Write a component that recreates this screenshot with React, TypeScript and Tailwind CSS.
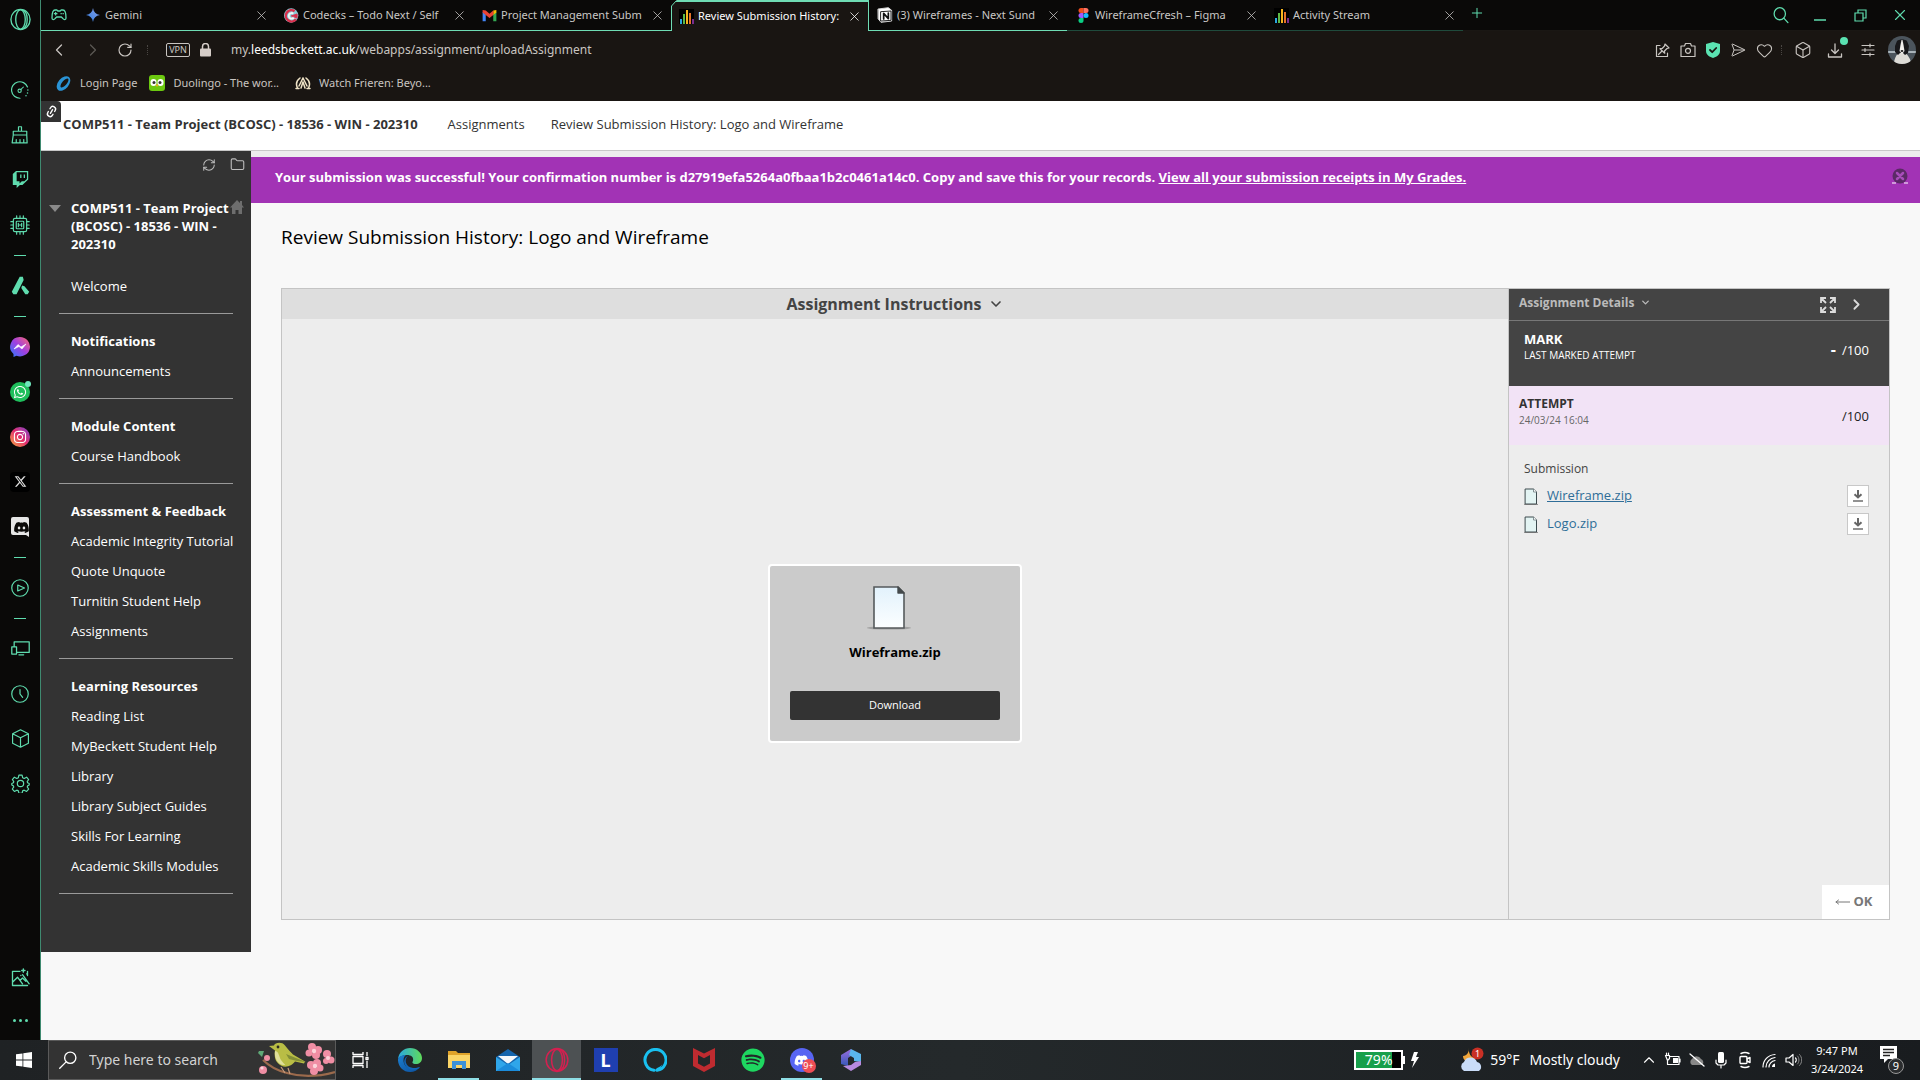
import React from 'react';
import {
  Box, ChevronDown, ChevronLeft, ChevronRight, ChevronUp, Folder, Heart,
  Link2, Plus, RefreshCw, RotateCw, SendHorizontal, X,
} from 'lucide-react';
import { FaDiscord, FaInstagram, FaSpotify, FaTwitch, FaWhatsapp, FaXTwitter } from 'react-icons/fa6';

type Kids = { children?: React.ReactNode };

/* ---------- Small drawings ---------- */

function Svg({ size = 20, w, h, box = '0 0 24 24', children }: Kids & { size?: number; w?: number; h?: number; box?: string }) {
  return (
    <svg width={w ?? size} height={h ?? size} viewBox={box} fill="none" stroke="currentColor" strokeWidth="1.4" strokeLinecap="round" strokeLinejoin="round" aria-hidden="true" className="shrink-0">
      {children}
    </svg>
  );
}

const OperaOutline = ({ size = 24 }: { size?: number }) => (
  <Svg size={size}>
    <ellipse cx="12" cy="12" rx="10" ry="10.5" />
    <ellipse cx="12" cy="12" rx="5" ry="10" />
    <path d="M14 2.2c3.200 1 5 5 5 9.800s-1.800 8.800-5 9.800" />
  </Svg>
);

const BarsIcon = () => (
  <Svg size={15} box="0 0 15 15">
    <rect width="15" height="15" fill="#000" stroke="none" />
    <g stroke="none">
      <rect x="1" y="10" width="2" height="5" fill="#2aa7e0" />
      <rect x="4" y="5" width="2" height="10" fill="#5db947" />
      <rect x="7" y="1" width="2" height="14" fill="#f5b51e" />
      <rect x="10" y="4" width="2" height="11" fill="#e5732a" />
      <rect x="13" y="10" width="2" height="5" fill="#7a2c8c" />
    </g>
  </Svg>
);

const GeminiIcon = () => (
  <Svg size={14}>
    <defs>
      <linearGradient id="gem" x1="0" y1="1" x2="1" y2="0">
        <stop offset="0" stopColor="#2f7de1" />
        <stop offset="1" stopColor="#8aa0e8" />
      </linearGradient>
    </defs>
    <path d="M12 0c1 7 5 11 12 12-7 1-11 5-12 12-1-7-5-11-12-12 7-1 11-5 12-12z" fill="url(#gem)" stroke="none" />
  </Svg>
);

const CodecksIcon = () => (
  <Svg size={15}>
    <circle cx="11.500" cy="12" r="11.500" fill="#8ccbd6" stroke="none" />
    <path d="M17 5a9 9 0 1 0 2 13" stroke="#d92f4c" strokeWidth="4" strokeLinecap="butt" />
    <path d="M15 9a4.500 4.500 0 1 0 1 6" stroke="#f4f4f4" strokeWidth="3" strokeLinecap="butt" />
    <path d="M12 12.500l9-3v6z" fill="#d92f4c" stroke="#d92f4c" />
  </Svg>
);

const GmailIcon = () => (
  <Svg size={15}>
    <g stroke="none">
      <path d="M1 21V6l5 4v11z" fill="#4285f4" />
      <path d="M18 21V10l5-4v15z" fill="#34a853" />
      <path d="M18 4l5-1v4l-5 4z" fill="#fbbc04" />
      <path d="M1 3l5 1 6 5 6-5v7l-6 5-6-5-5-4z" fill="#ea4335" />
    </g>
  </Svg>
);

const NotionIcon = () => (
  <Svg size={16}>
    <path d="M2 3l15-2 5 4v16l-16 2-4-5z" fill="#fff" stroke="#ddd" />
    <path d="M6 7l15-1v14l-15 1z" fill="#fff" stroke="#111" />
    <path d="M10 18V9.500l7 8V9" stroke="#111" strokeWidth="2.600" />
  </Svg>
);

const FigmaIcon = () => (
  <Svg w={11} h={15} box="0 0 16 24">
    <g stroke="none">
      <path d="M8 0H4a4 4 0 0 0 0 8h4z" fill="#f24e1e" />
      <path d="M8 0h4a4 4 0 0 1 0 8H8z" fill="#ff7262" />
      <path d="M8 8H4a4 4 0 0 0 0 8h4z" fill="#a259ff" />
      <circle cx="12" cy="12" r="4" fill="#1abcfe" />
      <path d="M8 16H4a4 4 0 1 0 4 4z" fill="#0acf83" />
    </g>
  </Svg>
);

const PageIcon = ({ w, h }: { w: number; h: number }) => (
  <Svg w={w} h={h} box="0 0 44 44">
    <defs>
      <linearGradient id="paper" x1="0" y1="0" x2="0" y2="1">
        <stop offset="0" stopColor="#e2f2fc" />
        <stop offset="1" stopColor="#fcfeff" />
      </linearGradient>
    </defs>
    <ellipse cx="22" cy="42" rx="22" ry="1.600" fill="#777" opacity=".5" stroke="none" />
    <path d="M7 1h24l6 6v35H7z" fill="url(#paper)" stroke="#555a5c" strokeWidth="1.600" strokeLinejoin="miter" />
    <path d="M31 1v6h6z" fill="#444a4c" stroke="#444a4c" />
  </Svg>
);

const SmallPage = () => (
  <Svg w={14} h={17} box="0 0 14 17">
    <path d="M1.500 1h8l3 3V16h-11z" fill="#e3f4f3" stroke="#3c4a4e" strokeWidth="1" />
    <path d="M9.500 1v3h3" fill="#fff" stroke="#6c7a7e" strokeWidth=".8" />
    <path d="M0 16.500h14" stroke="#555" strokeWidth=".6" />
  </Svg>
);

const DownloadGlyph = () => (
  <Svg size={12} box="0 0 12 12">
    <path d="M6 0v7M2.500 4.200L6 7.500l3.500-3.300" stroke="#666" strokeWidth="2" strokeLinecap="butt" strokeLinejoin="miter" />
    <path d="M1 11h10" stroke="#777" strokeWidth="1.600" strokeLinecap="butt" />
  </Svg>
);

/* ---------- Browser tab strip ---------- */

const tabs = [
  { title: 'Gemini', icon: <GeminiIcon /> },
  { title: 'Codecks – Todo Next / Self', icon: <CodecksIcon /> },
  { title: 'Project Management Subm', icon: <GmailIcon /> },
  { title: 'Review Submission History:', icon: <BarsIcon />, active: true },
  { title: '(3) Wireframes - Next Sund', icon: <NotionIcon /> },
  { title: 'WireframeCfresh – Figma', icon: <FigmaIcon /> },
  { title: 'Activity Stream', icon: <BarsIcon /> },
];

function TabStrip() {
  return (
    <header className="flex h-[31px] shrink-0 text-[#c9c7c5]">
      <div className="flex w-9 shrink-0 items-center justify-center border-b border-[#6fdcb4] text-[#5fdcae]">
        <Svg w={16} h={14} box="0 0 24 20">
          <path d="M6 2.500h3l1 1.500h4l1-1.500h3c3 0 4.500 6 4.500 12 0 3-3 3-5 .5l-2-2h-7l-2 2c-2 2.500-5 2.500-5-.5 0-6 1.500-12 4.500-12z" strokeWidth="2" />
          <path d="M7 6v4M5 8h4M15 8h.5M18 8h.5" strokeWidth="1.800" />
        </Svg>
      </div>
      <nav aria-label="Tabs" className="flex min-w-0">
        {tabs.map((t, i) => (
          <div
            key={i}
            className={
              t.active
                ? 'relative flex w-[198px] min-w-0 items-center border-x border-t-2 border-[#6fdcb4] bg-[#191512] pl-1.5 text-white'
                : i > 4
                  ? 'flex w-[198px] min-w-0 items-center border-b border-[#1f4a3c] pl-2'
                  : 'flex w-[198px] min-w-0 items-center border-b border-[#6fdcb4] pl-2'
            }
          >
            {t.active && (
              <svg width="6" height="8" viewBox="0 0 6 8" className="absolute -top-0.5 -left-px" aria-hidden="true">
                <path d="M0 0h6L0 7z" fill="#0b0a08" />
                <path d="M.5 8V6L5.500.5" stroke="#6fdcb4" fill="none" />
              </svg>
            )}
            <a href="#tab" className="flex min-w-0 flex-1 items-center gap-1 text-[11px] whitespace-nowrap">
              <span className="flex w-4 shrink-0 justify-center">{t.icon}</span>
              <span>{t.title}</span>
            </a>
            <button aria-label={'Close ' + t.title} className="flex w-7 shrink-0 items-center justify-center">
              <X size={15} strokeWidth={1.25} />
            </button>
          </div>
        ))}
      </nav>
      <div className="flex flex-1 items-center border-b border-[#1a1714] pb-1 pl-1.5 text-[#5fdcae]">
        <button aria-label="New tab"><Plus size={16} strokeWidth={1.5} /></button>
      </div>
      <div className="flex shrink-0 items-center border-b border-[#1a1714] text-[#5fdcae]">
        <button aria-label="Search tabs" className="flex w-10 justify-center">
          <Svg size={17}><ellipse cx="11" cy="9.500" rx="8" ry="8.500" strokeWidth="1.800" /><path d="M17 16l5.500 6" strokeWidth="1.800" /></Svg>
        </button>
        <button aria-label="Minimize" className="flex w-10 justify-center pt-2.5"><Svg w={12} h={2} box="0 0 12 2"><path d="M0 1h12" /></Svg></button>
        <button aria-label="Restore" className="flex w-10 justify-center">
          <Svg size={13} box="0 0 13 13"><path d="M4 4V1h8v8H9M1 4h8v8H1z" strokeWidth="1.200" strokeLinejoin="miter" /></Svg>
        </button>
        <button aria-label="Close window" className="flex w-10 justify-center"><X size={18} strokeWidth={1.5} /></button>
      </div>
    </header>
  );
}

function Toolbar() {
  return (
    <div className="flex h-[38px] shrink-0 items-center text-[#c9c5c1]">
      <button aria-label="Back" className="flex w-9 justify-center"><ChevronLeft size={20} strokeWidth={1.5} /></button>
      <button aria-label="Forward" className="flex w-8 justify-center text-[#5c5854]"><ChevronRight size={20} strokeWidth={1.5} /></button>
      <button aria-label="Reload" className="flex w-8 justify-center"><RotateCw size={16} strokeWidth={1.75} /></button>
      <span className="ml-1.5 h-2.5 border-l border-dotted border-[#4a4643]" />
      <span className="ml-4.5 flex h-3.5 w-6 items-center justify-center rounded-xs border border-[#c9c5c1] text-[9px]">VPN</span>
      <button aria-label="Site information" className="ml-2.5">
        <Svg w={11} h={14} box="0 0 11 14">
          <rect x="0" y="5.500" width="11" height="8" rx="1" fill="#d5cdc8" stroke="none" />
          <path d="M2.500 6V3.500a3 3 0 0 1 6 0V6" stroke="#d5cdc8" strokeWidth="1.500" />
        </Svg>
      </button>
      <button aria-label="Edit address" className="ml-5 flex-1 text-left text-xs">
        my.<span className="text-white">leedsbeckett.ac.uk</span>/webapps/assignment/uploadAssignment
      </button>
      <div className="flex items-center gap-2.5">
        <button aria-label="Pin page">
          <Svg size={15} box="0 0 15 15"><path d="M5 2.500H1.500v11h11V10M10 1l4 4-2 .5-2.500 2.500.2 2.200L5 5.700l2.200-.2L9.500 3zM7 8l-3.500 3.500" strokeWidth="1.200" /></Svg>
        </button>
        <button aria-label="Snapshot">
          <Svg size={16} box="0 0 16 16"><path d="M1 4h3.500l1-2.500h5l1 2.500H15v10.500H1z" strokeWidth="1.200" /><circle cx="8" cy="8.800" r="2.500" strokeWidth="1.200" /></Svg>
        </button>
        <button aria-label="Ad blocker">
          <Svg w={14} h={16} box="0 0 14 16">
            <path d="M7 0l7 2v7c0 4-4 6-7 7-3-1-7-3-7-7V2z" fill="#5be3b2" stroke="none" />
            <path d="M4 8l2.200 2.200L10.200 6" stroke="#191512" strokeWidth="1.800" />
          </Svg>
        </button>
        <button aria-label="Send"><SendHorizontal size={16} strokeWidth={1.5} /></button>
        <button aria-label="Bookmark"><Heart size={17} strokeWidth={1.5} /></button>
      </div>
      <span className="ml-2 h-2.5 border-l border-dotted border-[#4a4643]" />
      <button aria-label="Extensions" className="ml-3"><Box size={18} strokeWidth={1.5} /></button>
      <button aria-label="Downloads" className="relative ml-3.5">
        <Svg size={18} box="0 0 18 18"><path d="M9 3v9M5.500 9L9 12.500 12.500 9M2.500 13v3h13v-3" strokeWidth="1.300" /></Svg>
        <span className="absolute -top-1 -right-1 size-2 rounded-full bg-[#5be3b2]" />
      </button>
      <button aria-label="Easy setup" className="ml-4">
        <Svg size={16} box="0 0 16 16"><path d="M2 3.500h12M2 8h12M2 12.500h12M10 2v3M5 6.500v3M10 11v3" strokeWidth="1.200" /></Svg>
      </button>
      <button aria-label="Profile" className="mr-1 ml-3 overflow-hidden rounded-full">
        <svg width="28" height="28" viewBox="0 0 28 28" aria-hidden="true">
          <rect width="28" height="28" fill="#4b545c" />
          <path d="M0 15h28v2H0z" fill="#a9b3b9" />
          <path d="M6 28c0-5 2-8 4-11h8c2 3 5 6 5 11z" fill="#dddbd6" />
          <path d="M9 5c2-2 8-2 10 0l2 5-1 7-3 2-2-2h-3l-2 2-3-3 0-6z" fill="#17171a" />
          <path d="M13.500 4h1l1 5 1 6-2.500 3-2.500-3 1-6z" fill="#f1efec" />
          <ellipse cx="14" cy="15" rx="1.400" ry="1" fill="#222" />
        </svg>
      </button>
    </div>
  );
}

function Bookmarks() {
  return (
    <div className="flex h-8 shrink-0 items-center pb-1 pl-3.5 text-[11px] text-[#c9c5c1]">
      <a href="#login" className="flex items-center gap-2">
        <Svg size={17}>
          <ellipse cx="12" cy="12" rx="12" ry="7.500" transform="rotate(-50 12 12)" stroke="none" fill="#2a93d5" />
          <ellipse cx="13" cy="11.500" rx="8" ry="3.200" transform="rotate(-50 13 11)" stroke="none" fill="#191512" />
        </Svg>
        Login Page
      </a>
      <a href="#duolingo" className="ml-3 flex items-center gap-2">
        <Svg size={16} box="0 0 16 16">
          <rect width="16" height="16" rx="3" fill="#6cc910" stroke="none" />
          <rect x="1.500" y="4" width="6" height="7" rx="3" fill="#fff" stroke="none" />
          <rect x="8.500" y="4" width="6" height="7" rx="3" fill="#fff" stroke="none" />
          <circle cx="5" cy="7.500" r="1.500" fill="#333" stroke="none" />
          <circle cx="11" cy="7.500" r="1.500" fill="#333" stroke="none" />
          <path d="M6.500 9.500h3L8 12z" fill="#f5a91f" stroke="none" />
        </Svg>
        Duolingo - The wor...
      </a>
      <a href="#watch" className="ml-4 flex items-center gap-2">
        <Svg w={16} h={14} box="0 0 16 14">
          <path d="M8 2L4 10M8 2l4 8M5 2C1 5 1 9 2.500 12M11 2c4 3 4 7 2.500 10M8 6l-2 6M8 6l2 6M1 12.500h3M12 12.500h3" stroke="#efe3c6" strokeWidth="1.500" />
        </Svg>
        Watch Frieren: Beyo...
      </a>
    </div>
  );
}

/* ---------- Browser side bar ---------- */

const Slot = ({ label, children }: Kids & { label: string }) => (
  <button aria-label={label} className="flex h-[45px] w-full shrink-0 items-center justify-center">{children}</button>
);
const Dash = () => (
  <div className="flex h-4 w-full shrink-0 items-center justify-center"><span className="h-px w-3 bg-[#5fdcae]" /></div>
);

function OperaBar() {
  return (
    <aside className="flex w-[41px] shrink-0 flex-col items-center border-r border-[#3f8a70] bg-[#0a0908] text-[#5fdcae]">
      <button aria-label="Opera menu" className="mb-7.5 flex h-[37px] shrink-0 items-center pt-0.5"><OperaOutline size={23} /></button>
      <Slot label="GX Control">
        <Svg size={18}>
          <path d="M12 23A11 11 0 1 1 22 8" strokeWidth="1.600" /><path d="M22.500 12v.1M22 16v.1M20 19.500v.1" strokeWidth="2" />
          <circle cx="11.500" cy="13" r="2.200" /><path d="M13 11.500l3.500-3.500" />
        </Svg>
      </Slot>
      <Slot label="GX Cleaner">
        <Svg size={18}><path d="M10 7V1h4v6M3 7h18v5H3zM3 12L1.500 22.500h20L21 12M7 22v-4M12 22v-4M17 22v-4" strokeWidth="1.600" /></Svg>
      </Slot>
      <Slot label="Twitch"><FaTwitch size={17} /></Slot>
      <Slot label="Mods">
        <Svg size={20}>
          <rect x="4" y="4" width="16" height="16" rx="2" /><rect x="7.500" y="7.500" width="9" height="9" rx="1" />
          <path d="M10 10v4M14 10v4M10 12h4M8 1v3M12 1v3M16 1v3M8 20v3M12 20v3M16 20v3M1 8h3M1 12h3M1 16h3M20 8h3M20 12h3M20 16h3" />
        </Svg>
      </Slot>
      <Dash />
      <Slot label="Aria">
        <Svg size={19}><path d="M11 1h4l1 4L7 23H3l-2-3zM14 12l3 1 6 7-2 3h-3l-5-8z" fill="#5fdcae" stroke="none" /></Svg>
      </Slot>
      <Dash />
      <Slot label="Messenger">
        <svg width="20" height="20" viewBox="0 0 20 20" aria-hidden="true">
          <defs><linearGradient id="msg" x1="0" y1="1" x2="1" y2="0"><stop offset="0" stopColor="#2b7bff" /><stop offset=".5" stopColor="#a03fe0" /><stop offset="1" stopColor="#ff6a70" /></linearGradient></defs>
          <path d="M10 0a10 9.700 0 1 1-3.500 18.800L3.500 20v-3A9.700 9.700 0 0 1 10 0z" fill="url(#msg)" />
          <path d="M4 12l4-4.500 3 2.500 5-3-4 5-3-2.500z" fill="#fff" stroke="#fff" strokeWidth=".6" />
        </svg>
      </Slot>
      <Slot label="WhatsApp">
        <span className="relative flex size-5 items-center justify-center rounded-full bg-[#1fbf5c] text-white">
          <FaWhatsapp size={14} />
          <span className="absolute -top-px -right-px size-1.5 rounded-full bg-[#6fe6bd]" />
        </span>
      </Slot>
      <Slot label="Instagram">
        <span className="flex size-5 items-center justify-center rounded-full bg-linear-to-tr from-[#f7a52c] via-[#e2276b] to-[#7b2fd0] text-white"><FaInstagram size={14} /></span>
      </Slot>
      <Slot label="X"><span className="flex size-5 items-center justify-center rounded-sm bg-black text-[#dedede]"><FaXTwitter size={13} /></span></Slot>
      <Slot label="Discord">
        <svg width="18" height="20" viewBox="0 0 18 20" aria-hidden="true">
          <path d="M2 0h14a2 2 0 0 1 2 2v18l-3-2H2a2 2 0 0 1-2-2V2a2 2 0 0 1 2-2z" fill="#e6e6e6" />
          <FaDiscord x="2.500" y="2.500" width="13" height="13" color="#0a0908" />
        </svg>
      </Slot>
      <Dash />
      <Slot label="Player"><Svg size={18}><circle cx="12" cy="12" r="11" strokeWidth="1.600" /><path d="M9 8l9 4-9 4z" strokeWidth="1.600" /></Svg></Slot>
      <Dash />
      <Slot label="Flow"><Svg size={19}><path d="M4 10V3.500h19V17H7M1 10h6v9H1zM10 20h6" strokeWidth="1.600" /></Svg></Slot>
      <Slot label="History"><Svg size={18}><circle cx="12" cy="12" r="11" strokeWidth="1.600" /><path d="M12 6v6l3.500 4.500" strokeWidth="1.600" /></Svg></Slot>
      <Slot label="Extensions"><Svg size={19}><path d="M12 1l10 5v12l-10 5-10-5V6zM2 6l10 5 10-5M12 11v12" strokeWidth="1.500" /></Svg></Slot>
      <Slot label="Settings">
        <Svg size={19}>
          <circle cx="12" cy="12" r="4" strokeWidth="1.500" />
          <path d="M10 1.500h4l.7 3.200 2 .9 3-1.600 2.600 3-1.800 2.700.5 1.300 2 1v2l-2 1-.5 1.300 1.800 2.700-2.600 3-3-1.600-2 .9-.7 3.200h-4l-.7-3.200-2-.9-3 1.600-2.600-3 1.800-2.700-.5-1.300-2-1v-2l2-1 .5-1.300L1.700 7l2.600-3 3 1.600 2-.9z" strokeWidth="1.500" />
        </Svg>
      </Slot>
      <div className="mt-auto w-full">
        <Slot label="Wallpaper">
          <Svg size={20}><path d="M12 4H3v17h18M3 17l6-6 6 8M12 15l3-3 4 4M15 8l8 11M16 1v4M14 3h4M20 7v.1M21 4v5M13 9h.1" strokeWidth="1.600" /></Svg>
        </Slot>
        <button aria-label="More" className="flex h-10 w-full items-center justify-center gap-[3px]">
          <span className="size-[3px] rounded-full bg-[#5fdcae]" /><span className="size-[3px] rounded-full bg-[#5fdcae]" /><span className="size-[3px] rounded-full bg-[#5fdcae]" />
        </button>
      </div>
    </aside>
  );
}

/* ---------- Course page ---------- */

const groups = [
  { items: ['Welcome'] },
  { head: 'Notifications', items: ['Announcements'] },
  { head: 'Module Content', items: ['Course Handbook'] },
  { head: 'Assessment & Feedback', items: ['Academic Integrity Tutorial', 'Quote Unquote', 'Turnitin Student Help', 'Assignments'] },
  { head: 'Learning Resources', items: ['Reading List', 'MyBeckett Student Help', 'Library', 'Library Subject Guides', 'Skills For Learning', 'Academic Skills Modules'] },
];

function CourseMenu() {
  return (
    <nav aria-label="Course menu" className="w-[210px] shrink-0 self-start bg-[#333] pb-[46px] text-[13px] text-white">
      <div className="flex justify-end gap-3.5 pt-1.5 pr-1.5 text-[#bdbdbd]">
        <button aria-label="Refresh"><RefreshCw size={14} strokeWidth={1.75} /></button>
        <button aria-label="Open folder view"><Folder size={15} strokeWidth={1.75} /></button>
      </div>
      <div className="flex items-start pt-[27px] pl-2">
        <svg width="12" height="7" viewBox="0 0 12 7" className="mt-1.5 mr-2.5 shrink-0" aria-hidden="true"><path d="M0 0h12L6 7z" fill="#8a8a8a" /></svg>
        <h2 className="w-[159px] shrink-0 text-[13px] leading-[18px] font-bold"><a href="#course">COMP511 - Team Project (BCOSC) - 18536 - WIN - 202310</a></h2>
        <svg width="14" height="14" viewBox="0 0 14 14" className="mt-px shrink-0" aria-label="Course home"><path d="M7 0l3 3V1h2v4l2 2.500h-2V14H8.500v-4h-3v4H2V7.500H0z" fill="#6e6e6e" /></svg>
      </div>
      <div className="pt-4.5">
        {groups.map((g) => (
          <ul key={g.items[0]} className="mx-[18px] mb-3 border-b border-[#9a9a9a] pb-3 pl-3 leading-[30px] whitespace-nowrap">
            {g.head && <li className="font-bold">{g.head}</li>}
            {g.items.map((i) => <li key={i}><a href="#item">{i}</a></li>)}
          </ul>
        ))}
      </div>
    </nav>
  );
}

const files = ['Wireframe.zip', 'Logo.zip'];

function Submission() {
  return (
    <section className="mx-[30px] mt-[37px] flex min-h-[632px] border border-[#c4c4c4] bg-[#ededed]">
      <div className="flex min-w-0 flex-1 flex-col">
        <button className="flex h-[30px] items-center justify-center gap-1.5 bg-[#dedede] text-base font-bold text-[#444]">
          Assignment Instructions <ChevronDown size={16} strokeWidth={2.5} />
        </button>
        <div className="flex flex-1 items-center justify-center pt-17">
          <div className="flex h-[179px] w-[254px] flex-col items-center rounded-sm border-2 border-white bg-[#cbcbcb] px-5 pt-5">
            <div className="mr-3"><PageIcon w={44} h={44} /></div>
            <h2 className="mt-3 text-[13px] leading-5 font-bold text-black">Wireframe.zip</h2>
            <button className="mt-[29px] h-[29px] w-full rounded-xs bg-[#333] text-[11px] text-white">Download</button>
          </div>
        </div>
      </div>
      <aside className="flex w-[381px] shrink-0 flex-col border-l border-[#c4c4c4]">
        <div className="flex h-8 items-center border-b border-[#777] bg-[#444] pl-2.5 text-[#dcdcdc]">
          <button className="flex flex-1 items-center gap-1.5 pb-1 text-xs font-bold text-[#bbb]">Assignment Details <ChevronDown size={11} strokeWidth={3} /></button>
          <button aria-label="Full screen">
            <Svg size={16} box="0 0 16 16">
              <path d="M1 6V1h5M10 1h5v5M15 10v5h-5M6 15H1v-5M1 1l5 5M15 1l-5 5M15 15l-5-5M1 15l5-5" strokeWidth="1.800" strokeLinecap="butt" strokeLinejoin="miter" />
            </Svg>
          </button>
          <button aria-label="Collapse panel" className="mr-6 ml-3"><ChevronRight size={17} strokeWidth={2.5} /></button>
        </div>
        <div className="flex h-[65px] justify-between bg-[#444] pt-2 pr-5 pl-[15px] text-white">
          <div>
            <h3 className="text-[13px] leading-5 font-bold">MARK</h3>
            <p className="text-[10px] leading-3">LAST MARKED ATTEMPT</p>
          </div>
          <p className="pt-2.5 text-[13px] leading-5"><b className="mr-1.5 text-base leading-5">-</b>/100</p>
        </div>
        <div className="flex h-[59px] justify-between bg-[#f2e3f6] pt-2 pr-5 pl-2.5">
          <div>
            <h3 className="text-xs leading-5 font-bold text-[#333]">ATTEMPT</h3>
            <p className="text-[10px] leading-3 text-[#666]">24/03/24 16:04</p>
          </div>
          <p className="pt-3 text-[13px] leading-5 text-[#222]">/100</p>
        </div>
        <div className="pt-3.5 pr-5 pl-[15px] text-[13px]">
          <h3 className="text-xs leading-5 text-[#444]">Submission</h3>
          <ul className="mt-1.5">
            {files.map((f, i) => (
              <li key={f} className="mb-1.5 flex h-[22px] items-center">
                <SmallPage />
                <a href="#file" className={i === 0 ? 'ml-[9px] flex-1 text-[#2f6d98] underline' : 'ml-[9px] flex-1 text-[#2f6d98]'}>{f}</a>
                <button aria-label={'Download ' + f} className="flex size-[22px] items-center justify-center border border-[#c8c8c8] bg-white"><DownloadGlyph /></button>
              </li>
            ))}
          </ul>
        </div>
        <button className="mt-auto flex h-[34px] w-[67px] items-center justify-center gap-1 self-end bg-white pr-1 text-[13px] font-bold text-[#777]">
          <Svg w={15} h={6} box="0 0 15 6"><path d="M1 3h14M3.500 1L1 3l2.500 2" strokeWidth="1" /></Svg>OK
        </button>
      </aside>
    </section>
  );
}

function CoursePage() {
  return (
    <main className="flex min-h-0 flex-1 flex-col bg-[#f8f8f8] font-[Open_Sans,sans-serif]">
      <div className="flex h-[50px] shrink-0 border-b border-[#c8c8c8] bg-white">
        <button aria-label="Quick links" className="flex h-[21px] w-5 items-center justify-center rounded-tr-sm bg-[#333] text-white"><Link2 size={13} strokeWidth={2.5} className="-rotate-60" /></button>
        <nav aria-label="Breadcrumb" className="flex items-center pb-0.5 pl-0.5 text-[13px] text-[#333]">
          <a href="#course" className="font-bold">COMP511 - Team Project (BCOSC) - 18536 - WIN - 202310</a>
          <a href="#assignments" className="ml-[30px]">Assignments</a>
          <a href="#review" className="ml-[26px]">Review Submission History: Logo and Wireframe</a>
        </nav>
      </div>
      <div className="flex min-h-0 flex-1">
        <CourseMenu />
        <div className="min-w-0 flex-1">
          <div className="flex h-[52px] items-center justify-between border-t-6 border-[#ededed] bg-[#a233b5] pr-3 pb-1 pl-6 text-[13px] font-bold text-white">
            <p>
              Your submission was successful! Your confirmation number is d27919efa5264a0fbaa1b2c0461a14c0. Copy and save this for your records.{' '}
              <a href="#grades" className="underline">View all your submission receipts in My Grades.</a>
            </p>
            <button aria-label="Dismiss" className="-mt-1">
              <Svg size={16} box="0 0 16 16"><circle cx="8" cy="8" r="7.500" fill="#5b2a66" stroke="none" /><path d="M5 5l6 6M11 5l-6 6" stroke="#a84dba" strokeWidth="2.500" /><path d="M0 15h4M12 15h4" stroke="#fff" strokeWidth="1" strokeLinecap="butt" /></Svg>
            </button>
          </div>
          <h1 className="mt-5 ml-[30px] text-[19px] leading-7 font-normal text-black">Review Submission History: Logo and Wireframe</h1>
          <Submission />
        </div>
      </div>
    </main>
  );
}

/* ---------- Desktop task bar ---------- */

const Bird = () => (
  <svg width="78" height="36" viewBox="0 0 78 36" aria-hidden="true" className="shrink-0">
    <path d="M6 18c8 8 16 11 24 13 14 4 30 4 48-1" stroke="#9b6a4c" strokeWidth="2.200" fill="none" />
    <path d="M24 25l4 6M31 26l2 6" stroke="#c89a7a" strokeWidth="1.200" />
    <path d="M12 4l5-.5c1-3 8-4 11 0 3 4 6 7 8 9l12 7-1 2-9-2c-3 4-9 7-14 4-6-3-7-9-6-15z" fill="#b9bd45" />
    <path d="M18 9c4 0 4 6 6 9 2 3 5 5 4 5-7 1-11-7-10-14z" fill="#dfdf9a" />
    <path d="M29 12l20 8-9-1-8-2z" fill="#838f36" />
    <circle cx="21" cy="5" r="1.400" fill="#2b2a20" />
    <g fill="#f08ea4">
      <circle cx="6" cy="28" r="4" /><circle cx="10" cy="16" r="3" />
      <circle cx="55" cy="5" r="4" /><circle cx="61" cy="8" r="4" /><circle cx="52" cy="11" r="3.500" /><circle cx="59" cy="13" r="4" />
      <circle cx="54" cy="23" r="4" /><circle cx="60" cy="21" r="4" /><circle cx="57" cy="29" r="4" /><circle cx="63" cy="26" r="3.500" />
      <circle cx="70" cy="12" r="4" /><circle cx="74" cy="18" r="3.500" /><circle cx="69" cy="19" r="3" />
    </g>
    <g fill="#fcd3da"><circle cx="57" cy="9" r="2.200" /><circle cx="58" cy="24" r="2.200" /><circle cx="71" cy="16" r="2" /><circle cx="5" cy="26" r="1.600" /></g>
    <path d="M1 11l4 4 2-6-5 0z" fill="#5fa877" />
  </svg>
);

const Task = ({ label, state, children }: Kids & { label: string; state?: 'open' | 'focus' }) => (
  <button
    aria-label={label}
    className={
      state === 'focus'
        ? 'flex h-10 w-[49px] items-center justify-center border-y-2 border-t-[#4d5153] border-b-[#8fdfe6] bg-[#4d5153]'
        : state === 'open'
          ? 'mx-1 flex h-10 w-[41px] items-center justify-center border-y-2 border-t-transparent border-b-[#8fdfe6]'
          : 'flex h-10 w-[49px] items-center justify-center'
    }
  >
    {children}
  </button>
);

function TaskBar() {
  return (
    <footer className="flex h-10 shrink-0 items-center bg-linear-to-r from-[#1f2224] via-[#24292b] to-[#191c1f] text-white">
      <button aria-label="Start" className="flex w-12 shrink-0 justify-center">
        <svg width="16" height="16" viewBox="0 0 16 16" fill="#fff" aria-hidden="true"><path d="M0 2.300l6.500-.9v6.200H0zM7.300 1.300L16 0v7.600H7.300zM0 8.400h6.500v6.200L0 13.700zM7.300 8.400H16V16l-8.700-1.300z" /></svg>
      </button>
      <label className="flex h-10 w-[288px] shrink-0 items-center border border-[#5a5a5a] bg-[#333] pl-2.5">
        <Svg size={18}><circle cx="15" cy="9" r="7.500" strokeWidth="1.800" /><path d="M9.500 14.500L1 23" strokeWidth="1.800" /></Svg>
        <input aria-label="Search" placeholder="Type here to search" className="ml-3 w-0 min-w-0 flex-1 bg-transparent text-sm outline-none placeholder:text-[#d2d2d2]" />
        <Bird />
      </label>
      <Task label="Task view">
        <Svg w={17} h={16} box="0 0 17 16"><path d="M1 0v2.500h10V0M1 16v-2.500h10V16M1 4.500h10v7H1zM15 0v4M15 9v7M14 5.500h2v2h-2z" strokeWidth="1.300" strokeLinecap="butt" /></Svg>
      </Task>
      <div className="flex shrink-0">
        <Task label="Edge">
          <svg width="24" height="24" viewBox="0 0 24 24" aria-hidden="true">
            <defs>
              <linearGradient id="e1" x1="0" y1="0" x2="1" y2="0"><stop offset="0" stopColor="#2aa8e0" /><stop offset="1" stopColor="#5fdc5a" /></linearGradient>
              <linearGradient id="e2" x1="0" y1="0" x2="1" y2="1"><stop offset="0" stopColor="#1b7fd0" /><stop offset="1" stopColor="#0c4f9c" /></linearGradient>
            </defs>
            <path d="M0 11C1 4 6 0 12 0c7 0 12 5 12 10 0 4-3 6-6 6-4 0-4-2-3-3 1-4-2-6-6-6-4 0-8 2-9 4z" fill="url(#e1)" />
            <path d="M0 11c1-3 5-4 8-4-4 2-4 13 6 14 3 .4 6-1 8-2-2 3-6 5-10 5C5 24-.4 18 0 11z" fill="url(#e2)" />
            <path d="M10 8c-4 3-3 11 5 12 3 .4 6-1 7-1-3 4-12 4-15-2-2-4 0-8 3-9z" fill="#1266b8" />
          </svg>
        </Task>
        <Task label="File Explorer" state="open">
          <svg width="22" height="20" viewBox="0 0 22 20" aria-hidden="true">
            <path d="M0 1h8l2 2h12v15H0z" fill="#e0a32a" /><path d="M0 5h22v13H0z" fill="#fbd567" /><path d="M4 19v-8h14v8h-4v-4H8v4z" fill="#3c91d8" />
          </svg>
        </Task>
        <Task label="Mail">
          <svg width="24" height="22" viewBox="0 0 24 22" aria-hidden="true">
            <path d="M0 8l12-8 12 8v14H0z" fill="#1565ad" /><path d="M0 8l12 8 12-8v14H0z" fill="#2fa6ea" /><path d="M2 7h20l-10 8z" fill="#f4f8fb" /><path d="M0 22l12-8 12 8z" fill="#1b8cdb" />
          </svg>
        </Task>
        <Task label="Opera GX" state="focus"><span className="text-[#d42050]"><OperaOutline size={26} /></span></Task>
        <Task label="L app"><span className="flex size-6 items-center justify-center bg-[#1f3fb0] text-lg font-bold">L</span></Task>
        <Task label="Alexa">
          <Svg size={24}>
            <path d="M11 22.300A10.500 10.500 0 1 1 14 22.300" stroke="#19c0f0" strokeWidth="3" />
            <path d="M12.500 22c1-3 6.500-3 7.500-7l-3 6z" fill="#19c0f0" stroke="none" />
          </Svg>
        </Task>
        <Task label="McAfee"><svg width="22" height="24" viewBox="0 0 22 24" aria-hidden="true"><path d="M0 0l11 5.500L22 0v18l-11 6-11-6zM5 7v8.500l6 3.300 6-3.300V7l-6 3.300z" fill="#bf2b30" fillRule="evenodd" /></svg></Task>
        <Task label="Spotify"><FaSpotify size={24} color="#1ed760" /></Task>
        <Task label="Discord" state="open">
          <span className="relative flex size-6 items-center justify-center rounded-full bg-[#5865f2]">
            <FaDiscord size={15} />
            <span className="absolute -right-0.5 -bottom-px flex size-3.5 items-center justify-center rounded-full bg-[#ee4d55] text-[9px]">9+</span>
          </span>
        </Task>
        <Task label="Microsoft 365">
          <svg width="20" height="22" viewBox="0 0 20 22" aria-hidden="true">
            <defs><linearGradient id="m1" x1="0" y1="0" x2="0" y2="1"><stop offset="0" stopColor="#9b6fe0" /><stop offset="1" stopColor="#3557b8" /></linearGradient></defs>
            <path d="M0 6L10 0v7L7 9v8l-7-2z" fill="url(#m1)" /><path d="M10 0l10 5v8l-7-1V9L8 6z" fill="#5ab6ec" /><path d="M20 12v4l-10 6-8-5 8-1 4-3z" fill="#b78be0" />
          </svg>
        </Task>
      </div>
      <div className="ml-auto flex shrink-0 items-center">
        <div className="flex items-center">
          <div className="relative flex h-5 w-[49px] items-center justify-center border-2 border-white bg-black text-sm">
            <span className="absolute inset-y-0 left-0 w-4/5 bg-[#189f4b]" />
            <span className="relative">79%</span>
          </div>
          <span className="h-2 w-0.5 bg-white" />
          <svg width="8" height="16" viewBox="0 0 8 16" className="ml-1.5" aria-hidden="true"><path d="M3 0h4L5 5h3L1 16l2-7H0z" fill="#fff" /></svg>
        </div>
        <button className="ml-10 flex items-center gap-1.5 text-sm">
          <svg width="25" height="26" viewBox="0 0 25 26" aria-hidden="true">
            <path d="M10 1c-1 5 2 10 7 10-3 5-13 5-13-2 4 0 6-4 6-8z" fill="#f0a53a" />
            <path d="M5 24a5 5 0 0 1 0-9 7 7 0 0 1 13 0 5 5 0 0 1 2 9z" fill="#c9dcf8" />
            <circle cx="18.500" cy="6.500" r="6" fill="#c93025" />
            <text x="18.500" y="10" fontSize="9" fill="#fff" textAnchor="middle">1</text>
          </svg>
          <span className="mr-1">59°F</span><span>Mostly cloudy</span>
        </button>
        <div className="ml-5 flex items-center gap-1.5">
          <button aria-label="Hidden icons" className="flex w-[18px] justify-center"><ChevronUp size={18} strokeWidth={1.5} /></button>
          <Svg size={18} box="0 0 18 18"><path d="M6 5.500h9v8H6M16 8v3M1.500 4.500h4v3l-2 2zM2.500 2v2M4.500 2v2M3.500 9v4.500h3" strokeWidth="1.200" /><rect x="9" y="7" width="5" height="5" fill="#fff" stroke="none" /></Svg>
          <Svg size={18} box="0 0 18 18"><path d="M4 14a3.500 3.500 0 0 1 0-6 5 5 0 0 1 9 0 3.500 3.500 0 0 1 1 6z" fill="#888" stroke="none" /><path d="M2 3l14 12" strokeWidth="1.300" /></Svg>
          <Svg size={18} box="0 0 18 18"><rect x="6" y="1" width="6" height="11" rx="1.500" fill="#fff" stroke="none" /><path d="M4 9v3l2 2h6l2-2V9M9 14v3" strokeWidth="1.200" /></Svg>
          <Svg size={18} box="0 0 18 18"><rect x="4" y="5.500" width="7" height="7" rx="1" /><path d="M11 8l3-1.500v5L11 10M5 2.500c3-1.500 5-1.500 8 0M5 15.500c3 1.500 5 1.500 8 0" /></Svg>
          <Svg size={18} box="0 0 18 18"><path d="M3 16C3 9 8 4 15 3.500M6 16c0-5 4-9 9-9.500M9 16c0-3 2.500-6 6-6.500" strokeWidth="1.200" /><path d="M12 16c0-2 1-3 3-3.500V16z" fill="#fff" stroke="none" /></Svg>
          <Svg size={18} box="0 0 18 18"><path d="M2 7h3l4-3.500v11L5 11H2zM11.500 7c1 1 1 3 0 4" strokeWidth="1.200" /><path d="M13.500 5c2 2 2 6 0 8M15.500 3.500c3 3 3 8 0 11" stroke="#888" strokeWidth="1" /></Svg>
        </div>
        <time className="ml-2 w-[54px] text-center text-[11px] leading-[18px]">9:47 PM<br />3/24/2024</time>
        <button aria-label="9 notifications" className="relative mr-4 ml-4 h-7 w-6">
          <svg width="17" height="17" viewBox="0 0 17 17" className="absolute top-0 left-0" aria-hidden="true"><path d="M0 0h17v13H8l-4 4v-4H0z" fill="#fff" /><path d="M3 3.500h11M3 6.500h11M3 9.500h7" stroke="#222" strokeWidth="1.300" /></svg>
          <span className="absolute right-0 bottom-0 flex size-4 items-center justify-center rounded-full border border-[#999] bg-[#2a2c2e] text-[11px]">9</span>
        </button>
      </div>
    </footer>
  );
}

export default function App() {
  return (
    <div className="flex h-screen flex-col overflow-hidden bg-[#0a0908] font-[Noto_Sans,sans-serif]">
      <div className="flex min-h-0 flex-1">
        <OperaBar />
        <div className="flex min-w-0 flex-1 flex-col">
          <TabStrip />
          <div className="bg-[#191512]">
            <Toolbar />
            <Bookmarks />
          </div>
          <CoursePage />
        </div>
      </div>
      <TaskBar />
    </div>
  );
}
